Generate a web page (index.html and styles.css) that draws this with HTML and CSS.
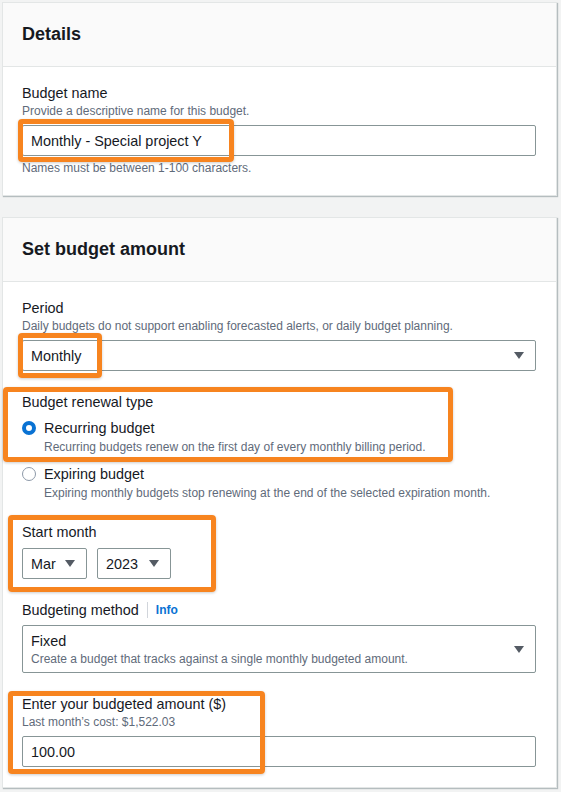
FILE: index.html
```html
<!DOCTYPE html>
<html lang="en">
<head>
<meta charset="utf-8">
<title>Budget details</title>
<link rel="stylesheet" href="styles.css">
</head>
<body>
<div class="page">
  <section class="card">
    <header class="card-header"><h2>Details</h2></header>
    <div class="card-body">
      <div class="field">
        <div class="label">Budget name</div>
        <div class="desc">Provide a descriptive name for this budget.</div>
        <div class="input">Monthly - Special project Y</div>
        <div class="desc hint">Names must be between 1-100 characters.</div>
      </div>
    </div>
  </section>

  <section class="card card2">
    <header class="card-header"><h2>Set budget amount</h2></header>
    <div class="card-body">
      <div class="field">
        <div class="label">Period</div>
        <div class="desc">Daily budgets do not support enabling forecasted alerts, or daily budget planning.</div>
        <div class="select"><span>Monthly</span><span class="caret"></span></div>
      </div>

      <div class="field">
        <div class="label">Budget renewal type</div>
        <div class="radios">
          <div class="radio">
            <span class="dot on"></span>
            <div>
              <div class="radio-label">Recurring budget</div>
              <div class="desc">Recurring budgets renew on the first day of every monthly billing period.</div>
            </div>
          </div>
          <div class="radio">
            <span class="dot"></span>
            <div>
              <div class="radio-label">Expiring budget</div>
              <div class="desc">Expiring monthly budgets stop renewing at the end of the selected expiration month.</div>
            </div>
          </div>
        </div>
      </div>

      <div class="field">
        <div class="label">Start month</div>
        <div class="pair">
          <div class="select small month"><span>Mar</span><span class="caret"></span></div>
          <div class="select small year"><span>2023</span><span class="caret"></span></div>
        </div>
      </div>

      <div class="field">
        <div class="label label-info">Budgeting method <span class="divider"></span><span class="info">Info</span></div>
        <div class="select tall">
          <div>
            <div class="opt">Fixed</div>
            <div class="desc">Create a budget that tracks against a single monthly budgeted amount.</div>
          </div>
          <span class="caret"></span>
        </div>
      </div>

      <div class="field">
        <div class="label">Enter your budgeted amount ($)</div>
        <div class="desc">Last month’s cost: $1,522.03</div>
        <div class="input">100.00</div>
      </div>
    </div>
  </section>

  <div class="mark m1"></div>
  <div class="mark m2"></div>
  <div class="mark m3"></div>
  <div class="mark m4"></div>
  <div class="mark m5"></div>
</div>
</body>
</html>
```

FILE: styles.css
```css
* { box-sizing: border-box; }
html, body { margin: 0; padding: 0; }
body {
  background: #f2f3f3;
  font-family: "Liberation Sans", Arial, sans-serif;
  color: #16191f;
}
.page {
  position: relative;
  padding: 2px 4px 0 2px;
  display: flex;
  flex-direction: column;
  gap: 21px;
  height: 792px;
}
.card {
  background: #fff;
  border: 1px solid #e3e6e6;
  box-shadow: 1px 1px 1px rgba(0, 28, 36, 0.25);
}
.card-header {
  height: 64px;
  background: #fafafa;
  border-bottom: 1px solid #e3e6e6;
  padding: 0 19px;
  display: flex;
  align-items: center;
}
.card-header h2 {
  margin: 0;
  font-size: 18px;
  font-weight: 700;
  color: #16191f;
}
.card-body {
  padding: 16px 20px 19px 19px;
  display: flex;
  flex-direction: column;
  gap: 21px;
}
.card2 .card-body { padding-bottom: 20px; }
.field { display: flex; flex-direction: column; }
.label {
  font-size: 14.4px;
  line-height: 20px;
  color: #16191f;
}
.desc {
  font-size: 12px;
  line-height: 16px;
  color: #5f6b7a;
}
.hint { margin-top: 4px; }
.input, .select {
  margin-top: 7px;
  height: 31px;
  border: 1px solid #879596;
  border-radius: 2px;
  padding: 0 10px 0 8px;
  font-size: 14.4px;
  display: flex;
  align-items: center;
  background: #fff;
}
.field .desc + .select, .field .desc + .input { margin-top: 6px; }
.select { justify-content: space-between; }
.caret {
  width: 0;
  height: 0;
  border-left: 5px solid transparent;
  border-right: 5px solid transparent;
  border-top: 7px solid #545b64;
  margin-right: 1px;
}
.radios { display: flex; flex-direction: column; gap: 9px; margin-top: 6px; }
.radio { display: flex; align-items: flex-start; }
.radio-label { font-size: 14.4px; line-height: 20px; }
.radio .desc { margin-top: 1px; }
.dot {
  width: 14px;
  height: 14px;
  border-radius: 50%;
  border: 1.5px solid #8d99a8;
  margin: 3px 8px 0 0;
  flex: none;
  background: #fff;
}
.dot.on { border: 4px solid #0972d3; }
.pair { display: flex; gap: 10px; margin-top: 6px; }
.pair .select { margin-top: 0; }
.select.small { height: 31px; padding-right: 10px; }
.month { width: 65px; }
.year { width: 74px; }
.label-info { display: flex; align-items: center; }
.divider {
  display: inline-block;
  width: 1px;
  height: 16px;
  background: #d1d5db;
  margin: 0 8px;
}
.info { font-size: 12px; font-weight: 700; color: #0972d3; }
.select.tall {
  height: 48px;
  margin-top: 5px;
  align-items: center;
}
.opt { font-size: 14.4px; line-height: 20px; }

.mark {
  position: absolute;
  border: 5px solid #f7841f;
  border-radius: 4px;
  box-shadow: 0 1px 3px rgba(0, 0, 0, 0.2);
}
.m1 { left: 18px; top: 119px; width: 216px; height: 43px; }
.m2 { left: 18px; top: 333px; width: 84px; height: 45px; }
.m3 { left: 3px; top: 387px; width: 450px; height: 75px; }
.m4 { left: 8px; top: 515px; width: 208px; height: 77px; }
.m5 { left: 8px; top: 691px; width: 257px; height: 83px; }
```
